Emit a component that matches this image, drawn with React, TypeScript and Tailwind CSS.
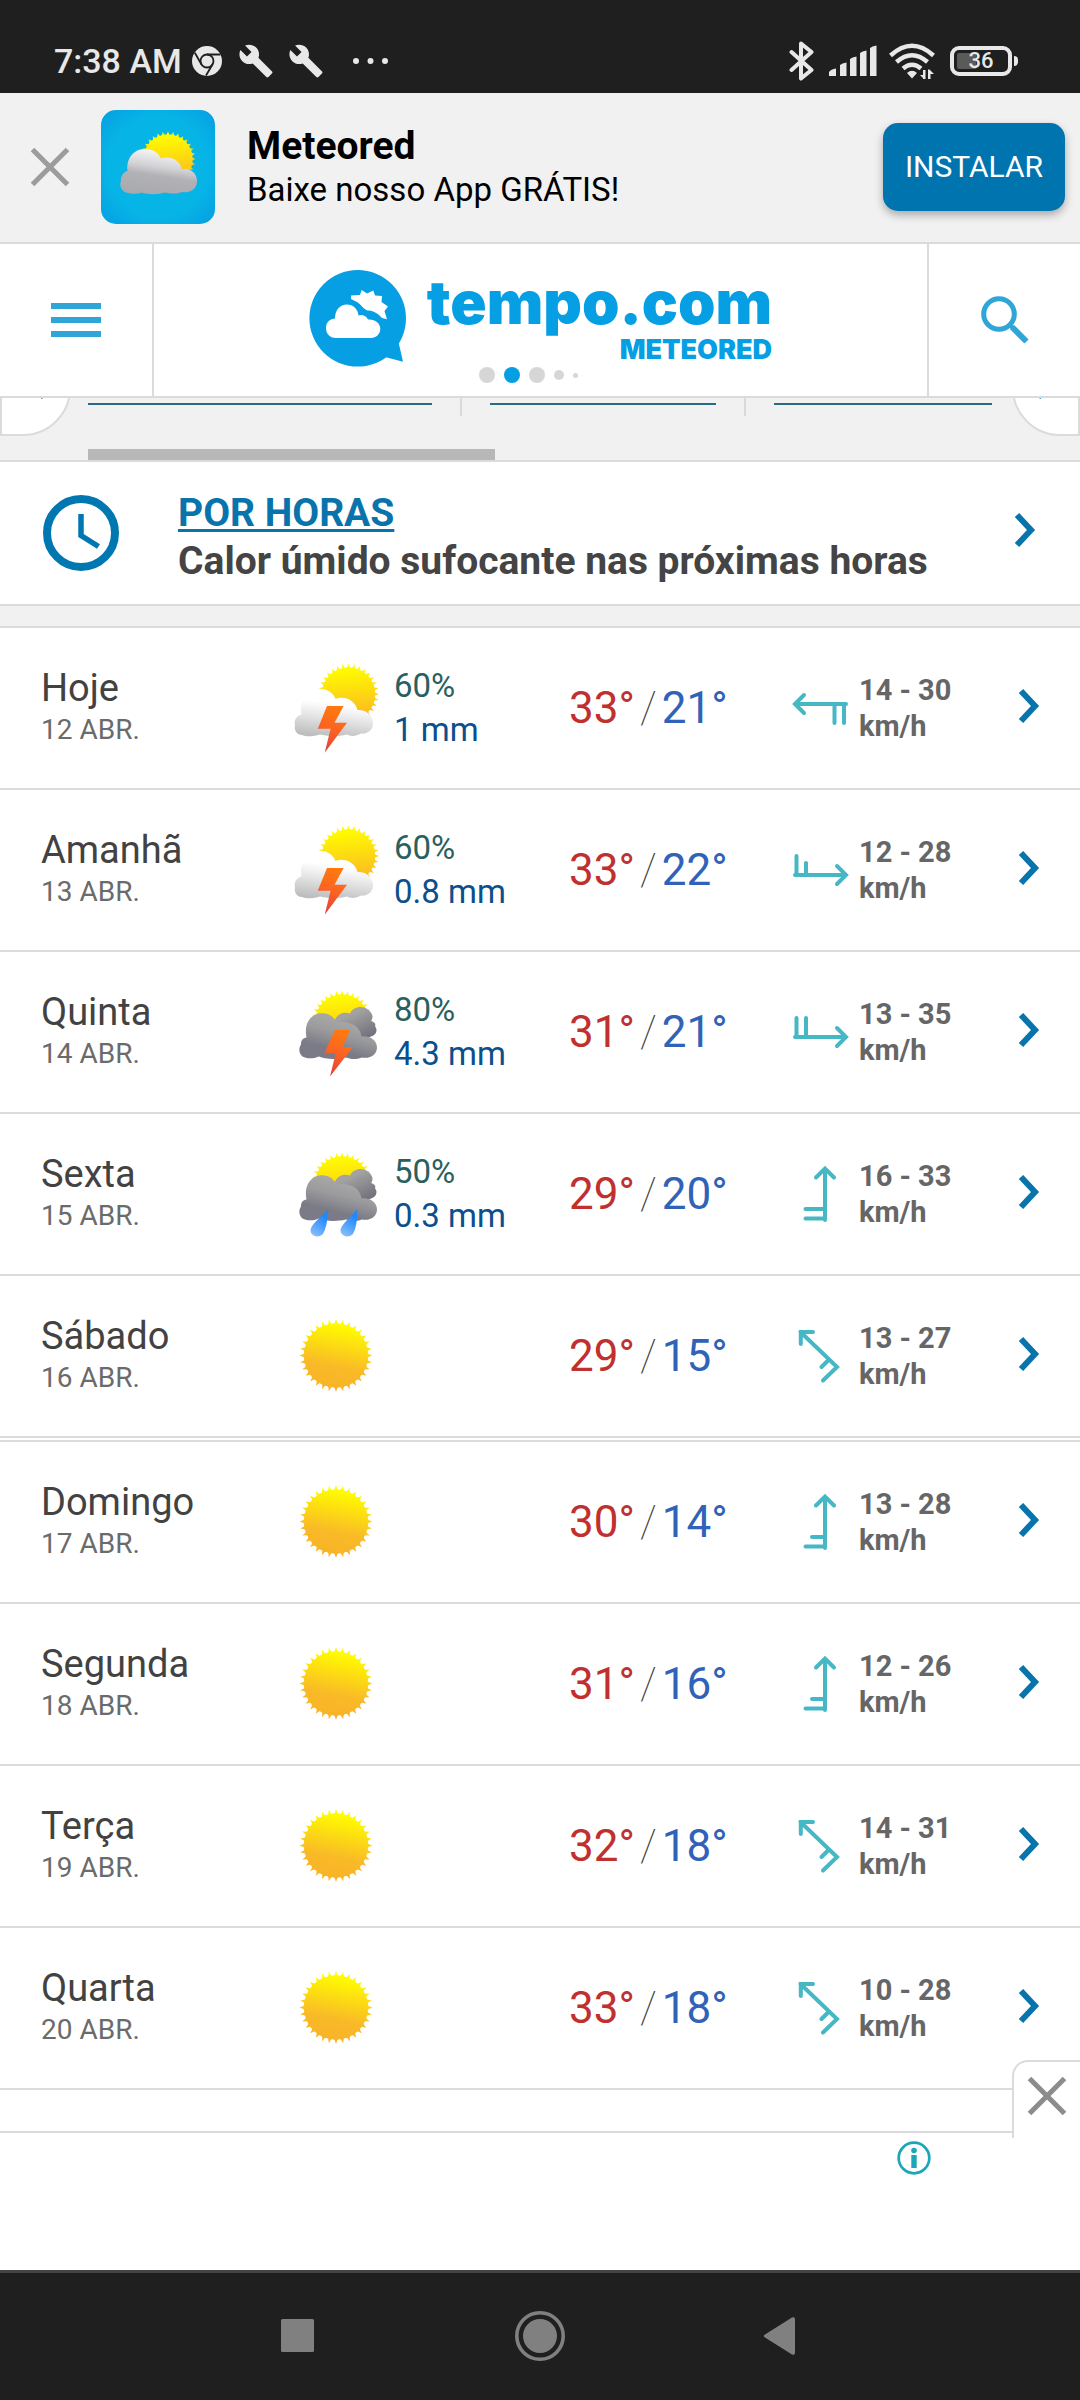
import React from "react";
import { MdBuild } from "react-icons/md";

type Sky = "storm" | "darkStorm" | "rain" | "sun";
type Wind = "left" | "rightShort" | "right" | "up" | "upShort" | "northwest";

type Day = {
  name: string;
  date: string;
  sky: Sky;
  chance?: string;
  amount?: string;
  max: number;
  min: number;
  wind: Wind;
  speed: string;
};

const firstDays: Day[] = [
  { name: "Hoje", date: "12 ABR.", sky: "storm", chance: "60%", amount: "1 mm", max: 33, min: 21, wind: "left", speed: "14 - 30" },
  { name: "Amanhã", date: "13 ABR.", sky: "storm", chance: "60%", amount: "0.8 mm", max: 33, min: 22, wind: "rightShort", speed: "12 - 28" },
  { name: "Quinta", date: "14 ABR.", sky: "darkStorm", chance: "80%", amount: "4.3 mm", max: 31, min: 21, wind: "right", speed: "13 - 35" },
  { name: "Sexta", date: "15 ABR.", sky: "rain", chance: "50%", amount: "0.3 mm", max: 29, min: 20, wind: "up", speed: "16 - 33" },
  { name: "Sábado", date: "16 ABR.", sky: "sun", max: 29, min: 15, wind: "northwest", speed: "13 - 27" },
];

const nextDays: Day[] = [
  { name: "Domingo", date: "17 ABR.", sky: "sun", max: 30, min: 14, wind: "upShort", speed: "13 - 28" },
  { name: "Segunda", date: "18 ABR.", sky: "sun", max: 31, min: 16, wind: "upShort", speed: "12 - 26" },
  { name: "Terça", date: "19 ABR.", sky: "sun", max: 32, min: 18, wind: "northwest", speed: "14 - 31" },
  { name: "Quarta", date: "20 ABR.", sky: "sun", max: 33, min: 18, wind: "northwest", speed: "10 - 28" },
];

/* Disc with thin curved teeth around its edge. */
function sunPath(cx: number, cy: number, inner: number, outer: number, teeth: number) {
  const at = (r: number, a: number) =>
    `${(cx + r * Math.cos(a)).toFixed(2)} ${(cy + r * Math.sin(a)).toFixed(2)}`;
  const step = (Math.PI * 2) / teeth;
  let d = `M${at(outer, -Math.PI / 2)}`;
  for (let i = 0; i < teeth; i++) {
    const a = -Math.PI / 2 + i * step;
    d += `L${at(inner, a + step * 0.22)}L${at(inner - 0.6, a + step * 0.5)}L${at(inner, a + step * 0.78)}L${at(outer, a + step)}`;
  }
  return d + "Z";
}

const SUN_BIG = sunPath(46, 47.5, 32.5, 36.5, 32);
const SUN_RIGHT = sunPath(58.5, 34, 27, 30.5, 32);
const SUN_BACK = sunPath(52, 37, 27, 30.5, 32);
const CLOUD_LIGHT =
  "M12 75C6 75 4 69 5 65C3.500 60 7 55.500 11.500 54.500C9.500 42 14 32.500 24 29.500C35 27 43 32 45.500 39C54 35.500 65 40 67.500 50C75 49.500 82 54 83 62C84 70 77 74.500 71 73.500C65 77 60 76 57 74.500C46 77 36 76 30 74.500C24 76.500 16 77 12 75Z";
const CLOUD_DARK =
  "M15 73.500C9 72 8 64.500 11 60.500C11 56 13 54 16.500 53.500C14 41 19 32 28.500 29.500C37 28 44 32 46 38.500C58 36.500 70 41 71.500 52.500C80 51.500 87 56.500 87 63.500C87 71 80 75 72 73.500C65 76 60 75 56 73.500C46 76 34 75 29 72.500C24 74.500 19 75 15 73.500Z";
const CLOUD_FAR =
  "M44 38C47 29 54 27.500 60 29.500C64 20.500 79 20.500 82.500 32C82.500 34 82 36 81 37C85 38 86 40.500 85 42.500C88 45.500 86.500 51 81 52.500L68 58L46 48Z";

function SkyDefs() {
  return (
    <svg className="absolute size-0" aria-hidden="true">
      <defs>
        <linearGradient id="sunFill" x1="0.6" y1="0" x2="0.4" y2="1">
          <stop offset="0.1" stopColor="#fffa00" />
          <stop offset="0.65" stopColor="#f9ba27" />
          <stop offset="1" stopColor="#f8b228" />
        </linearGradient>
        <linearGradient id="sunPart" x1="0.5" y1="0" x2="0.6" y2="1">
          <stop offset="0.1" stopColor="#fffa00" />
          <stop offset="0.9" stopColor="#fbb724" />
        </linearGradient>
        <linearGradient id="lightCloud" x1="0.55" y1="0.15" x2="0.35" y2="1">
          <stop offset="0.2" stopColor="#ffffff" />
          <stop offset="0.55" stopColor="#e4e4e4" />
          <stop offset="1" stopColor="#bdbdbf" />
        </linearGradient>
        <linearGradient id="darkCloud" x1="0.6" y1="0.1" x2="0.25" y2="0.9">
          <stop offset="0.1" stopColor="#a6a6a6" />
          <stop offset="0.4" stopColor="#9b9b9d" />
          <stop offset="0.8" stopColor="#7b7b87" />
        </linearGradient>
        <linearGradient id="farCloud" x1="0.4" y1="0.1" x2="0.9" y2="1">
          <stop offset="0.1" stopColor="#a2a2a2" />
          <stop offset="0.8" stopColor="#73737f" />
        </linearGradient>
        <linearGradient id="bolt" x1="0.6" y1="0" x2="0.4" y2="1">
          <stop offset="0" stopColor="#ff7a0d" />
          <stop offset="0.5" stopColor="#fb6322" />
          <stop offset="1" stopColor="#e0403c" />
        </linearGradient>
        <linearGradient id="drop" x1="0.7" y1="0" x2="0.3" y2="1">
          <stop offset="0.2" stopColor="#1e88ff" />
          <stop offset="1" stopColor="#86bcfb" />
        </linearGradient>
        <linearGradient id="appCloud" x1="0.65" y1="0" x2="0.4" y2="1">
          <stop offset="0.1" stopColor="#f2f2f4" />
          <stop offset="0.4" stopColor="#d3d3d6" />
          <stop offset="0.6" stopColor="#b2b2b6" />
          <stop offset="1" stopColor="#a9aaae" />
        </linearGradient>
        <radialGradient id="appSky" cx="0.5" cy="0.5" r="0.72">
          <stop offset="0.6" stopColor="#06b5e6" />
          <stop offset="1" stopColor="#069ce2" />
        </radialGradient>
      </defs>
    </svg>
  );
}

function SkyIcon({ sky }: { sky: Sky }) {
  return (
    <svg viewBox="0 0 96 96" className="size-24 shrink-0" aria-hidden="true">
      {sky === "sun" && <path d={SUN_BIG} fill="url(#sunFill)" />}
      {sky === "storm" && (
        <>
          <path d={SUN_RIGHT} fill="url(#sunPart)" />
          <path d={CLOUD_LIGHT} fill="url(#lightCloud)" />
          <path d="M37 46H53.600L44.500 62.700H57L34.700 92.700L40.600 68.700H27.800Z" fill="url(#bolt)" />
        </>
      )}
      {(sky === "darkStorm" || sky === "rain") && (
        <>
          <path d={SUN_BACK} fill="url(#sunPart)" />
          <path d={CLOUD_FAR} fill="url(#farCloud)" />
          <path d={CLOUD_DARK} fill="url(#darkCloud)" />
        </>
      )}
      {sky === "darkStorm" && (
        <path d="M45 46H60L52.500 63H63L40 92.600L45.700 69.300H34.300Z" fill="url(#bolt)" />
      )}
      {sky === "rain" && (
        <g fill="url(#drop)">
          <path d="M37.700 63.500C38 73 36 84 32.500 88.500C27 93 19 89 20.800 82.500C23 77 30 72 37.700 63.500Z" />
          <path d="M67.300 63C67.500 73 66 84 62.500 88.500C57 93 49 89 50.800 82.500C53 77 60 72 67.300 63Z" />
        </g>
      )}
    </svg>
  );
}

const windPaths: Record<Wind, string> = {
  left: "M7 28H58M16 19L7 28L16 37M56 28V47M46.500 28V47",
  rightShort: "M7 37H58M49 28L58 37L49 46M8.500 37V18M18 37V25",
  right: "M7 37H58M49 28L58 37L49 46M8.500 37V18M18 37V18",
  up: "M37 58V6.500M28 15.500L37 6.500L46 15.500M37 56.500H17.500M37 47H17.500",
  upShort: "M37 58V6.500M28 15.500L37 6.500L46 15.500M37 56.500H17.500M37 47H24",
  northwest: "M12.500 8L49 43L35 56.500M12.800 20V8H25M41 35.500L33.500 43",
};

function WindIcon({ wind }: { wind: Wind }) {
  return (
    <svg
      viewBox="0 0 64 64"
      className="size-16 shrink-0 fill-none stroke-[#46b7c5] stroke-[4]"
      strokeLinecap="round"
      aria-hidden="true"
    >
      <path d={windPaths[wind]} />
    </svg>
  );
}

function Chevron() {
  return (
    <svg viewBox="0 0 22 36" className="h-9 w-[22px] fill-none stroke-[#0874ab] stroke-[6]" aria-hidden="true">
      <path d="M3 3L17 18L3 33" />
    </svg>
  );
}

function Cross() {
  return (
    <svg viewBox="0 0 40 40" className="size-10 fill-none stroke-current stroke-[5]" aria-hidden="true">
      <path d="M2.500 2.500L37.500 37.500M37.500 2.500L2.500 37.500" />
    </svg>
  );
}

function DayRow({ day }: { day: Day }) {
  return (
    <li className="border-b-2 border-[#dbdbdb]">
      <a
        href="#dia"
        className="grid h-40 grid-cols-[249fr_279fr_219fr_230fr_62fr] items-center pl-[41px]"
      >
        <div className="pb-[2px]">
          <p className="text-[38px] leading-[46px] text-[#424242]">{day.name}</p>
          <p className="text-[28px] leading-[38px] text-[#6b6b6b]">{day.date}</p>
        </div>
        <div className="flex items-center gap-2">
          <SkyIcon sky={day.sky} />
          {day.chance && (
            <div className="text-[33px] leading-[44px]">
              <p className="text-[#29605f]">{day.chance}</p>
              <p className="text-[#0b4f8d]">{day.amount}</p>
            </div>
          )}
        </div>
        <p className="flex items-center gap-[5px] text-[44px] leading-[52px]">
          <span className="text-[#c0302f]">{day.max}°</span>
          <span className="font-thin text-[#3d3d3d]">/</span>
          <span className="text-[#2f62b8]">{day.min}°</span>
        </p>
        <div className="flex items-center gap-[7px]">
          <WindIcon wind={day.wind} />
          <p className="text-[29px] font-bold leading-[36px] text-[#666666]">
            <span className="block">{day.speed}</span>
            <span className="block">km/h</span>
          </p>
        </div>
        <span className="pb-1">
          <Chevron />
        </span>
      </a>
    </li>
  );
}

function StatusBar() {
  return (
    <div className="flex h-[93px] items-center justify-between bg-[#1f1f1f] pl-[54px] pr-[62px] pt-7 text-[#e8e8e8]">
      <div className="flex items-center">
        <span className="text-[34px] font-medium leading-[40px]">7:38 AM</span>
        <svg viewBox="0 0 30 30" className="ml-[10px] size-[30px]" aria-hidden="true">
          <circle cx="15" cy="15" r="15" fill="currentColor" />
          <g fill="none" stroke="#1f1f1f" strokeWidth="1.8">
            <circle cx="15" cy="15" r="6.500" />
            <path d="M15 8.500H28.500M9.400 18.300L2.800 6.800M20.600 18.300L14 29.500" />
          </g>
        </svg>
        <MdBuild className="ml-4 size-9" />
        <MdBuild className="ml-[14px] size-9" />
        <svg viewBox="0 0 36 6" className="ml-[29px] h-[6px] w-9" fill="currentColor" aria-hidden="true">
          <circle cx="3" cy="3" r="3" />
          <circle cx="17.500" cy="3" r="3" />
          <circle cx="32" cy="3" r="3" />
        </svg>
      </div>
      <div className="flex items-center">
        <svg viewBox="0 0 26 40" className="h-10 w-[26px] fill-none stroke-current stroke-[4]" strokeLinejoin="round" strokeLinecap="round" aria-hidden="true">
          <path d="M2.500 11L22.500 29L12 37.500V2.500L22.500 11L2.500 29" />
        </svg>
        <svg viewBox="0 0 48 32" className="ml-[14px] h-8 w-12" fill="currentColor" aria-hidden="true">
          <path d="M0 31V27Q2 24 7 23.500V31ZM11 31V20Q13 18 17.500 17.500V31ZM21 31V14Q23 12 27.500 11.500V31ZM31 31V8Q33 6 37.500 5.500V31ZM41 31V3Q43 1 47.500 0.500V31Z" />
        </svg>
        <svg viewBox="0 0 46 36" className="ml-3 h-9 w-[46px]" aria-hidden="true">
          <g fill="none" stroke="currentColor" strokeWidth="4.500">
            <path d="M1.500 12.500Q23 -7 44.500 12.500M7.500 19Q23 5.500 38.500 19M14 25.500Q23 18 32 25.500" />
          </g>
          <path d="M18 30Q23 25.500 28 30L23 35.500ZM34 35L31 32H34V27H36.500V36H34ZM39 36V26.500H40.500L45 31H41.500V36Z" fill="currentColor" />
        </svg>
        <div className="ml-[15px] flex h-[30px] w-[62px] items-center justify-center rounded-[9px] border-4 border-current bg-linear-to-r from-[#5a5a5a] from-40% to-[#1f1f1f] to-40% bg-clip-content p-[3px]">
          <span className="text-[22px] font-medium leading-6">36</span>
        </div>
        <span className="ml-[2px] h-[10px] w-1 rounded-r bg-current" />
      </div>
    </div>
  );
}

function InstallBanner() {
  return (
    <div className="flex h-[151px] items-center border-b-2 border-[#dbdbdb] bg-[#f1f1f1] pb-[2px] pl-[30px] pr-[15px]">
      <button type="button" aria-label="Fechar" className="text-[#9c9c9c]">
        <Cross />
      </button>
      <svg viewBox="0 0 114 114" className="ml-[31px] size-[114px]" aria-hidden="true">
        <rect width="114" height="114" rx="15" fill="url(#appSky)" />
        <path d={sunPath(67, 49, 25, 27.5, 32)} fill="url(#sunPart)" />
        <path
          d="M27 83C20 82 18 75 20 71C19.500 67 22 62 26.500 61C25 48 33 39.500 43 39C51 38.500 57 42 60 48.500C69 45.500 79 50 81 59.500C89 57.500 96 63 96 71C96 79 89 83.500 81 82C74 85 68 83 64 82.500C56 85 46 84.500 41 82.500C37 84 31 84 27 83Z"
          fill="url(#appCloud)"
        />
      </svg>
      <div className="ml-8 flex-1 pt-[2px] text-black">
        <p className="text-[39px] font-bold leading-[44px]">Meteored</p>
        <p className="text-[33px] leading-[44px]">Baixe nosso App GRÁTIS!</p>
      </div>
      <button
        type="button"
        className="h-[88px] w-[182px] rounded-[15px] bg-[#0074af] text-[30px] text-white shadow-[0_4px_8px_rgba(0,0,0,0.3)]"
      >
        INSTALAR
      </button>
    </div>
  );
}

function Header() {
  return (
    <header className="flex h-[154px] border-b-2 border-[#dbdbdb] bg-white">
      <button type="button" aria-label="Menu" className="flex w-[154px] items-center justify-center border-r-2 border-[#dbdbdb]">
        <svg viewBox="0 0 50 34" className="h-[34px] w-[50px] fill-[#30a5d8]" aria-hidden="true">
          <path d="M0 0H50V6H0ZM0 14H50V20H0ZM0 28H50V34H0Z" />
        </svg>
      </button>
      <a href="#inicio" className="relative flex flex-1 items-center justify-center gap-[18px] text-[#069fe3]">
        <svg viewBox="0 0 100 100" className="size-[100px]" fill="currentColor" aria-hidden="true">
          <circle cx="48.700" cy="48.300" r="48.300" />
          <g transform="translate(0 -2)">
            <path d="M89.700 75L94 93.800L76 89L70 80Z" />
            <path
              d="M27 70C20.500 70 17 65.500 17 60C17 54 21.500 50.500 26 50.500C26 42 31 36.500 38 36.500C44 36.500 49 41 49.500 47.500C53 46 57 47.500 59 51.500C66 51 71.300 55 71.300 61C71.300 66 67 70 62 70Z"
              fill="#ffffff"
            />
            <path
              d="M42 27.500L51 27L52.700 22L58 25.500L64.300 22.500L66 27.500L73 28L72.500 34L79 38.500L75.500 43L78 51.300L73 50L69.500 46.500C65 43 61 42 58.500 42.500C54 41 52 36 48 34L42 31Z"
              fill="#ffffff"
            />
          </g>
        </svg>
        <span className="flex flex-col items-end pb-1 font-[Inter,sans-serif] font-black">
          <span className="text-[60px] leading-[64px]">tempo.com</span>
          <span className="text-[27px] leading-[32px]">METEORED</span>
        </span>
        <span className="absolute bottom-[13px] left-[325px] flex items-center gap-[9px]" aria-hidden="true">
          <span className="size-4 rounded-full bg-[#d6d6d6]" />
          <span className="size-4 rounded-full bg-[#069fe3]" />
          <span className="size-4 rounded-full bg-[#d6d6d6]" />
          <span className="size-[10px] rounded-full bg-[#d6d6d6]" />
          <span className="size-[5px] rounded-full bg-[#d6d6d6]" />
        </span>
      </a>
      <button type="button" aria-label="Buscar" className="flex w-[153px] items-center justify-center border-l-2 border-[#dbdbdb]">
        <svg viewBox="0 0 48 48" className="size-12 fill-none stroke-[#30a5d8]" aria-hidden="true">
          <circle cx="18" cy="18" r="15.300" strokeWidth="5" />
          <path d="M31 31L45.500 45.500" strokeWidth="6" />
          <path d="M28.500 28.500L34 34" strokeWidth="4" />
        </svg>
      </button>
    </header>
  );
}

function TabStrip() {
  return (
    <nav aria-label="Seções" className="relative overflow-hidden border-b-2 border-[#dbdbdb] bg-[#f1f1f1]">
      <div className="grid grid-cols-[344fr_58px_227fr_58px_218fr] px-[88px]">
        <a href="#s1" aria-label="Seção 1" className="h-[7px] border-b-2 border-[#2b6a85]" />
        <span className="mx-auto h-[18px] w-[2px] bg-[#d9d9d9]" />
        <a href="#s2" aria-label="Seção 2" className="h-[7px] border-b-2 border-[#2b6a85]" />
        <span className="mx-auto h-[18px] w-[2px] bg-[#d9d9d9]" />
        <a href="#s3" aria-label="Seção 3" className="h-[7px] border-b-2 border-[#2b6a85]" />
      </div>
      <div className="mt-[33px] px-[88px]">
        <div className="h-[11px] w-[45%] bg-[#b8b8b8]" />
      </div>
      <button
        type="button"
        aria-label="Anterior"
        className="absolute bottom-6 left-0 flex h-[108px] w-[71px] items-center justify-center rounded-r-[48px] border-2 border-[#dbdbdb] bg-white"
      >
        <span className="rotate-180">
          <Chevron />
        </span>
      </button>
      <button
        type="button"
        aria-label="Próximo"
        className="absolute bottom-6 right-0 flex h-[108px] w-[68px] items-center justify-center rounded-l-[48px] border-2 border-[#dbdbdb] bg-white"
      >
        <Chevron />
      </button>
    </nav>
  );
}

function HourlyCard() {
  return (
    <a href="#horas" className="flex h-[144px] items-center border-b-2 border-[#dbdbdb] bg-white pl-[43px] pr-[44px]">
      <svg viewBox="0 0 76 76" className="size-[76px] fill-none stroke-[#0077b0]" aria-hidden="true">
        <circle cx="38" cy="38" r="34" strokeWidth="8" />
        <path d="M38 19V40.500L55.500 51.500" strokeWidth="5.500" />
      </svg>
      <div className="ml-[59px] flex-1 pt-2 text-[39px] font-bold leading-[48px]">
        <p className="text-[#0874ab] underline decoration-[3px] underline-offset-[3px]">POR HORAS</p>
        <p className="text-[#444444]">Calor úmido sufocante nas próximas horas</p>
      </div>
      <span className="pb-[6px]">
        <Chevron />
      </span>
    </a>
  );
}

function NavBar() {
  return (
    <div className="flex h-[130px] items-center justify-center gap-[178px] border-t-3 border-[#444444] bg-[#1f1f1f] pb-[2px] text-[#808080]">
      <button type="button" aria-label="Recentes">
        <svg viewBox="0 0 56 50" className="h-[50px] w-14" fill="currentColor" aria-hidden="true">
          <rect x="0" y="8" width="33" height="33" rx="1.500" />
        </svg>
      </button>
      <button type="button" aria-label="Início">
        <svg viewBox="0 0 50 50" className="size-[50px]" aria-hidden="true">
          <circle cx="25" cy="25" r="23.200" fill="none" stroke="currentColor" strokeWidth="3.600" />
          <circle cx="25" cy="25" r="17" fill="currentColor" />
        </svg>
      </button>
      <button type="button" aria-label="Voltar">
        <svg viewBox="0 0 56 50" className="h-[50px] w-14" fill="currentColor" aria-hidden="true">
          <path d="M22 23.500L49 6.500Q52 5.500 52 8V42Q52 44.500 49 43.500L22 26.500Q19.500 25 22 23.500Z" />
        </svg>
      </button>
    </div>
  );
}

export default function App() {
  return (
    <div className="flex min-h-screen flex-col bg-white font-[Roboto,sans-serif]">
      <SkyDefs />
      <StatusBar />
      <InstallBanner />
      <Header />
      <main>
        <TabStrip />
        <HourlyCard />
        <div className="h-[22px] border-b-2 border-[#dbdbdb] bg-[#f1f1f1]" />
        <ul>
          {firstDays.map((day) => (
            <DayRow key={day.name} day={day} />
          ))}
        </ul>
        <ul className="mt-[2px] border-t-2 border-[#dbdbdb]">
          {nextDays.map((day) => (
            <DayRow key={day.name} day={day} />
          ))}
        </ul>
      </main>
      <aside className="relative mt-[41px] flex-1 border-t-2 border-[#dbdbdb] bg-white">
        <button
          type="button"
          aria-label="Fechar anúncio"
          className="absolute -top-[73px] right-0 flex h-[78px] w-[68px] items-center justify-center rounded-tl-2xl border-l-2 border-t-2 border-[#dbdbdb] bg-white pb-2 text-[#8c8c8c]"
        >
          <Cross />
        </button>
        <div className="flex justify-end pr-[149px] pt-2">
          <button type="button" aria-label="Informações do anúncio">
            <svg viewBox="0 0 34 34" className="size-[34px]" aria-hidden="true">
              <circle cx="17" cy="17" r="15.300" fill="none" stroke="#1aa7b8" strokeWidth="2.700" />
              <circle cx="17" cy="9.500" r="2.800" fill="#1aa7b8" />
              <path d="M14.300 14H19.700V27H14.300Z" fill="#1aa7b8" />
            </svg>
          </button>
        </div>
      </aside>
      <NavBar />
    </div>
  );
}
